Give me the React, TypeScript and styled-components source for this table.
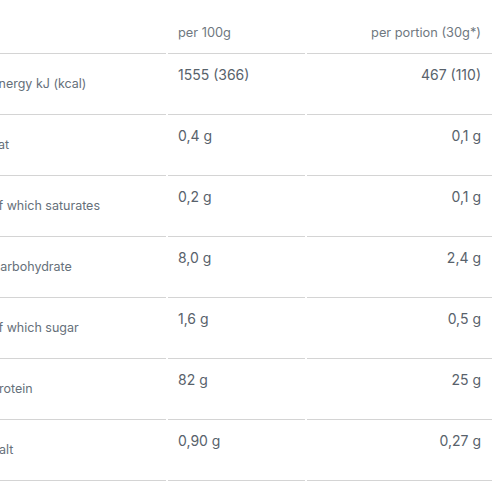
import React from "react";
import styled, { createGlobalStyle } from "styled-components";

const Global = createGlobalStyle`
  html, body { margin: 0; padding: 0; background: #ffffff; }
  body { font-family: Inter, "Noto Sans", Arial, sans-serif; }
`;

const Wrapper = styled.div`
  width: 493px;
  height: 493px;
  overflow: hidden;
  background: #fff;
`;

const Table = styled.table`
  margin-left: -11px;
  width: 505px;
  table-layout: fixed;
  border-collapse: separate;
  border-spacing: 2px 0;
`;

const HeadCell = styled.th<{ $align?: "left" | "right" }>`
  height: 54px;
  box-sizing: border-box;
  padding-top: 0;
  padding-bottom: 11px;
  padding-right: ${(p) => (p.$align === "right" ? "11px" : "0")};
  padding-left: ${(p) => (p.$align === "right" ? "0" : "10px")};
  vertical-align: bottom;
  text-align: ${(p) => p.$align ?? "left"};
  font-weight: 400;
  font-size: 12.8px;
  line-height: 18px;
  color: #6f787f;
  border-bottom: 1px solid #d4d4d4;
  white-space: nowrap;
`;

const LabelCell = styled.td`
  height: 61px;
  box-sizing: border-box;
  padding: 0;
  vertical-align: middle;
  font-size: 12.5px;
  line-height: 18px;
  color: #66707a;
  border-bottom: 1px solid #d4d4d4;
  white-space: nowrap;
`;

const ValueCell = styled.td<{ $align?: "left" | "right" }>`
  height: 61px;
  box-sizing: border-box;
  padding: 11px ${(p) => (p.$align === "right" ? "11px" : "0")} 0
    ${(p) => (p.$align === "right" ? "0" : "10px")};
  vertical-align: top;
  text-align: ${(p) => p.$align ?? "left"};
  font-size: 14px;
  line-height: 20px;
  color: #58626b;
  border-bottom: 1px solid #d4d4d4;
  white-space: nowrap;
`;

const rows: [string, string, string][] = [
  ["Energy kJ (kcal)", "1555 (366)", "467 (110)"],
  ["Fat", "0,4 g", "0,1 g"],
  ["of which saturates", "0,2 g", "0,1 g"],
  ["Carbohydrate", "8,0 g", "2,4 g"],
  ["of which sugar", "1,6 g", "0,5 g"],
  ["Protein", "82 g", "25 g"],
  ["Salt", "0,90 g", "0,27 g"],
];

export default function App() {
  return (
    <Wrapper>
      <Global />
      <Table>
        <colgroup>
          <col style={{ width: 175 }} />
          <col style={{ width: 137 }} />
          <col style={{ width: 185 }} />
        </colgroup>
        <thead>
          <tr>
            <HeadCell aria-label="nutrient" />
            <HeadCell>per 100g</HeadCell>
            <HeadCell $align="right">per portion (30g*)</HeadCell>
          </tr>
        </thead>
        <tbody>
          {rows.map(([label, a, b]) => (
            <tr key={label}>
              <LabelCell>{label}</LabelCell>
              <ValueCell>{a}</ValueCell>
              <ValueCell $align="right">{b}</ValueCell>
            </tr>
          ))}
        </tbody>
      </Table>
    </Wrapper>
  );
}
